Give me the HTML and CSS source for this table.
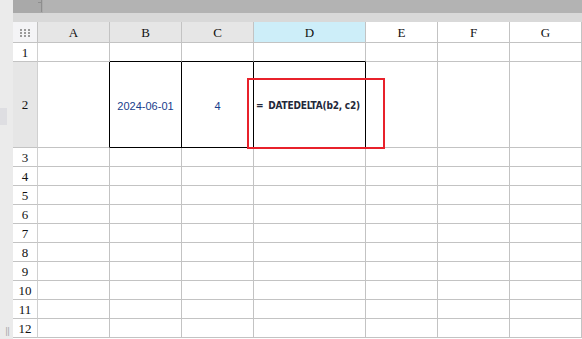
FILE: index.html
```html
<!DOCTYPE html>
<html lang="en">
  <head>
    <meta charset="UTF-8" />
    <meta name="viewport" content="width=device-width, initial-scale=1.0" />
    <title>Sheet</title>
    <link rel="stylesheet" href="styles.css">
  </head>
  <body>
    <div class="window">
      <div class="side-strip">
        <span class="side-mark"></span>
        <span class="side-grip">||</span>
      </div>

      <div class="workspace">
        <div class="tab-bar">
          <div class="tab-stub"><span class="tab-tick"></span></div>
        </div>
        <div class="formula-band"></div>

        <div class="sheet sheet-top">
          <!-- header row -->
          <div class="cell corner">
            <svg width="10" height="8" viewBox="0 0 10 8">
              <g fill="#9a9a9a">
                <rect x="0" y="0" width="2" height="2" /><rect x="4" y="0" width="2" height="2" /><rect x="8" y="0" width="2" height="2" />
                <rect x="0" y="3" width="2" height="2" /><rect x="4" y="3" width="2" height="2" /><rect x="8" y="3" width="2" height="2" />
                <rect x="0" y="6" width="2" height="2" /><rect x="4" y="6" width="2" height="2" /><rect x="8" y="6" width="2" height="2" />
              </g>
            </svg>
          </div>
          <div class="cell col-head shaded">A</div>
          <div class="cell col-head shaded">B</div>
          <div class="cell col-head shaded">C</div>
          <div class="cell col-head active">D</div>
          <div class="cell col-head">E</div>
          <div class="cell col-head">F</div>
          <div class="cell col-head">G</div>

          <!-- row 1 -->
          <div class="cell row-head">1</div>
          <div class="cell"></div>
          <div class="cell edge-bottom"></div>
          <div class="cell edge-bottom"></div>
          <div class="cell edge-bottom"></div>
          <div class="cell"></div>
          <div class="cell"></div>
          <div class="cell"></div>

          <!-- row 2 -->
          <div class="cell row-head shaded">2</div>
          <div class="cell edge-right"></div>
          <div class="cell boxed value">2024-06-01</div>
          <div class="cell boxed value">4</div>
          <div class="cell boxed formula"><span class="eq">=</span>DATEDELTA(b2, c2)</div>
          <div class="cell"></div>
          <div class="cell"></div>
          <div class="cell"></div>
        </div>

        <div class="sheet" id="rest"></div>
      </div>

      <div class="highlight"></div>
    </div>

    <script>
      // plain empty rows 3..12
      const rest = document.getElementById('rest');
      for (let r = 3; r <= 12; r++) {
        let html = '<div class="cell row-head">' + r + '</div>';
        for (let c = 0; c < 7; c++) {
          html += '<div class="cell"></div>';
        }
        rest.insertAdjacentHTML('beforeend', html);
      }
    </script>
  </body>
</html>
```

FILE: styles.css
```css
* {
  box-sizing: border-box;
}

body {
  margin: 0;
  background: #ffffff;
  overflow: hidden;
}

.window {
  position: relative;
  display: flex;
  width: 582px;
  height: 339px;
}

.side-strip {
  position: relative;
  width: 13px;
  flex-shrink: 0;
  background: #ebebeb;
}
.side-mark {
  position: absolute;
  left: 0;
  top: 108px;
  width: 7px;
  height: 17px;
  background: #dedee2;
}
.side-grip {
  position: absolute;
  left: 5px;
  top: 326px;
  font-family: 'DejaVu Sans', sans-serif;
  font-size: 9px;
  color: #a8a8a8;
  letter-spacing: -1px;
}

.workspace {
  flex: 1;
  display: flex;
  flex-direction: column;
}

.tab-bar {
  height: 13px;
  background: #b3b3b3;
}
.tab-stub {
  position: relative;
  width: 30px;
  height: 13px;
  background: #a9a9a9;
}
.tab-tick {
  position: absolute;
  right: 1px;
  top: 0;
  width: 4px;
  height: 12px;
  border-right: 1px solid #8e8e8e;
}
.tab-tick::before {
  content: '';
  position: absolute;
  left: 0;
  top: 2px;
  width: 4px;
  height: 1px;
  background: #8e8e8e;
}

.formula-band {
  height: 9px;
  background: #d9d9d9;
}

.sheet {
  display: grid;
  grid-template-columns: 25px 72px 72px 72px 112px 72px 72px 72px;
  grid-auto-rows: 19px;
}
.sheet-top {
  grid-template-rows: 21px 19px 86px;
}

.cell {
  border-right: 1px solid #c3c3c3;
  border-bottom: 1px solid #c3c3c3;
  background: #ffffff;
  display: flex;
  align-items: center;
  justify-content: center;
}

.corner {
  background: #f4f4f6;
  padding-top: 1px;
}

.col-head,
.row-head {
  font-family: 'Liberation Serif', serif;
  font-size: 13px;
  color: #111111;
}
.col-head {
  padding-top: 2px;
}
.row-head {
  border-right-color: #d0d0d0;
  padding-top: 1px;
}
.shaded {
  background: #e6e6e6;
}
.active {
  background: #cdeef9;
}

.edge-bottom {
  border-bottom-color: #000000;
}
.edge-right {
  border-right-color: #000000;
}
.boxed {
  border-right-color: #000000;
  border-bottom-color: #000000;
}

.value {
  font-family: 'Liberation Sans', sans-serif;
  font-size: 11px;
  color: #17408c;
  padding-top: 2px;
}
.formula {
  justify-content: flex-start;
  white-space: nowrap;
  padding-left: 2px;
  padding-top: 2px;
  font-family: 'DejaVu Sans Condensed', 'DejaVu Sans', sans-serif;
  font-size: 10px;
  font-weight: bold;
  letter-spacing: -0.2px;
  color: #23283a;
}
.formula .eq {
  margin-right: 5px;
}

/* red annotation frame around the formula cell */
.highlight {
  position: absolute;
  left: 247px;
  top: 78px;
  width: 138px;
  height: 71px;
  border: 2px solid #e8212b;
  pointer-events: none;
}
```
